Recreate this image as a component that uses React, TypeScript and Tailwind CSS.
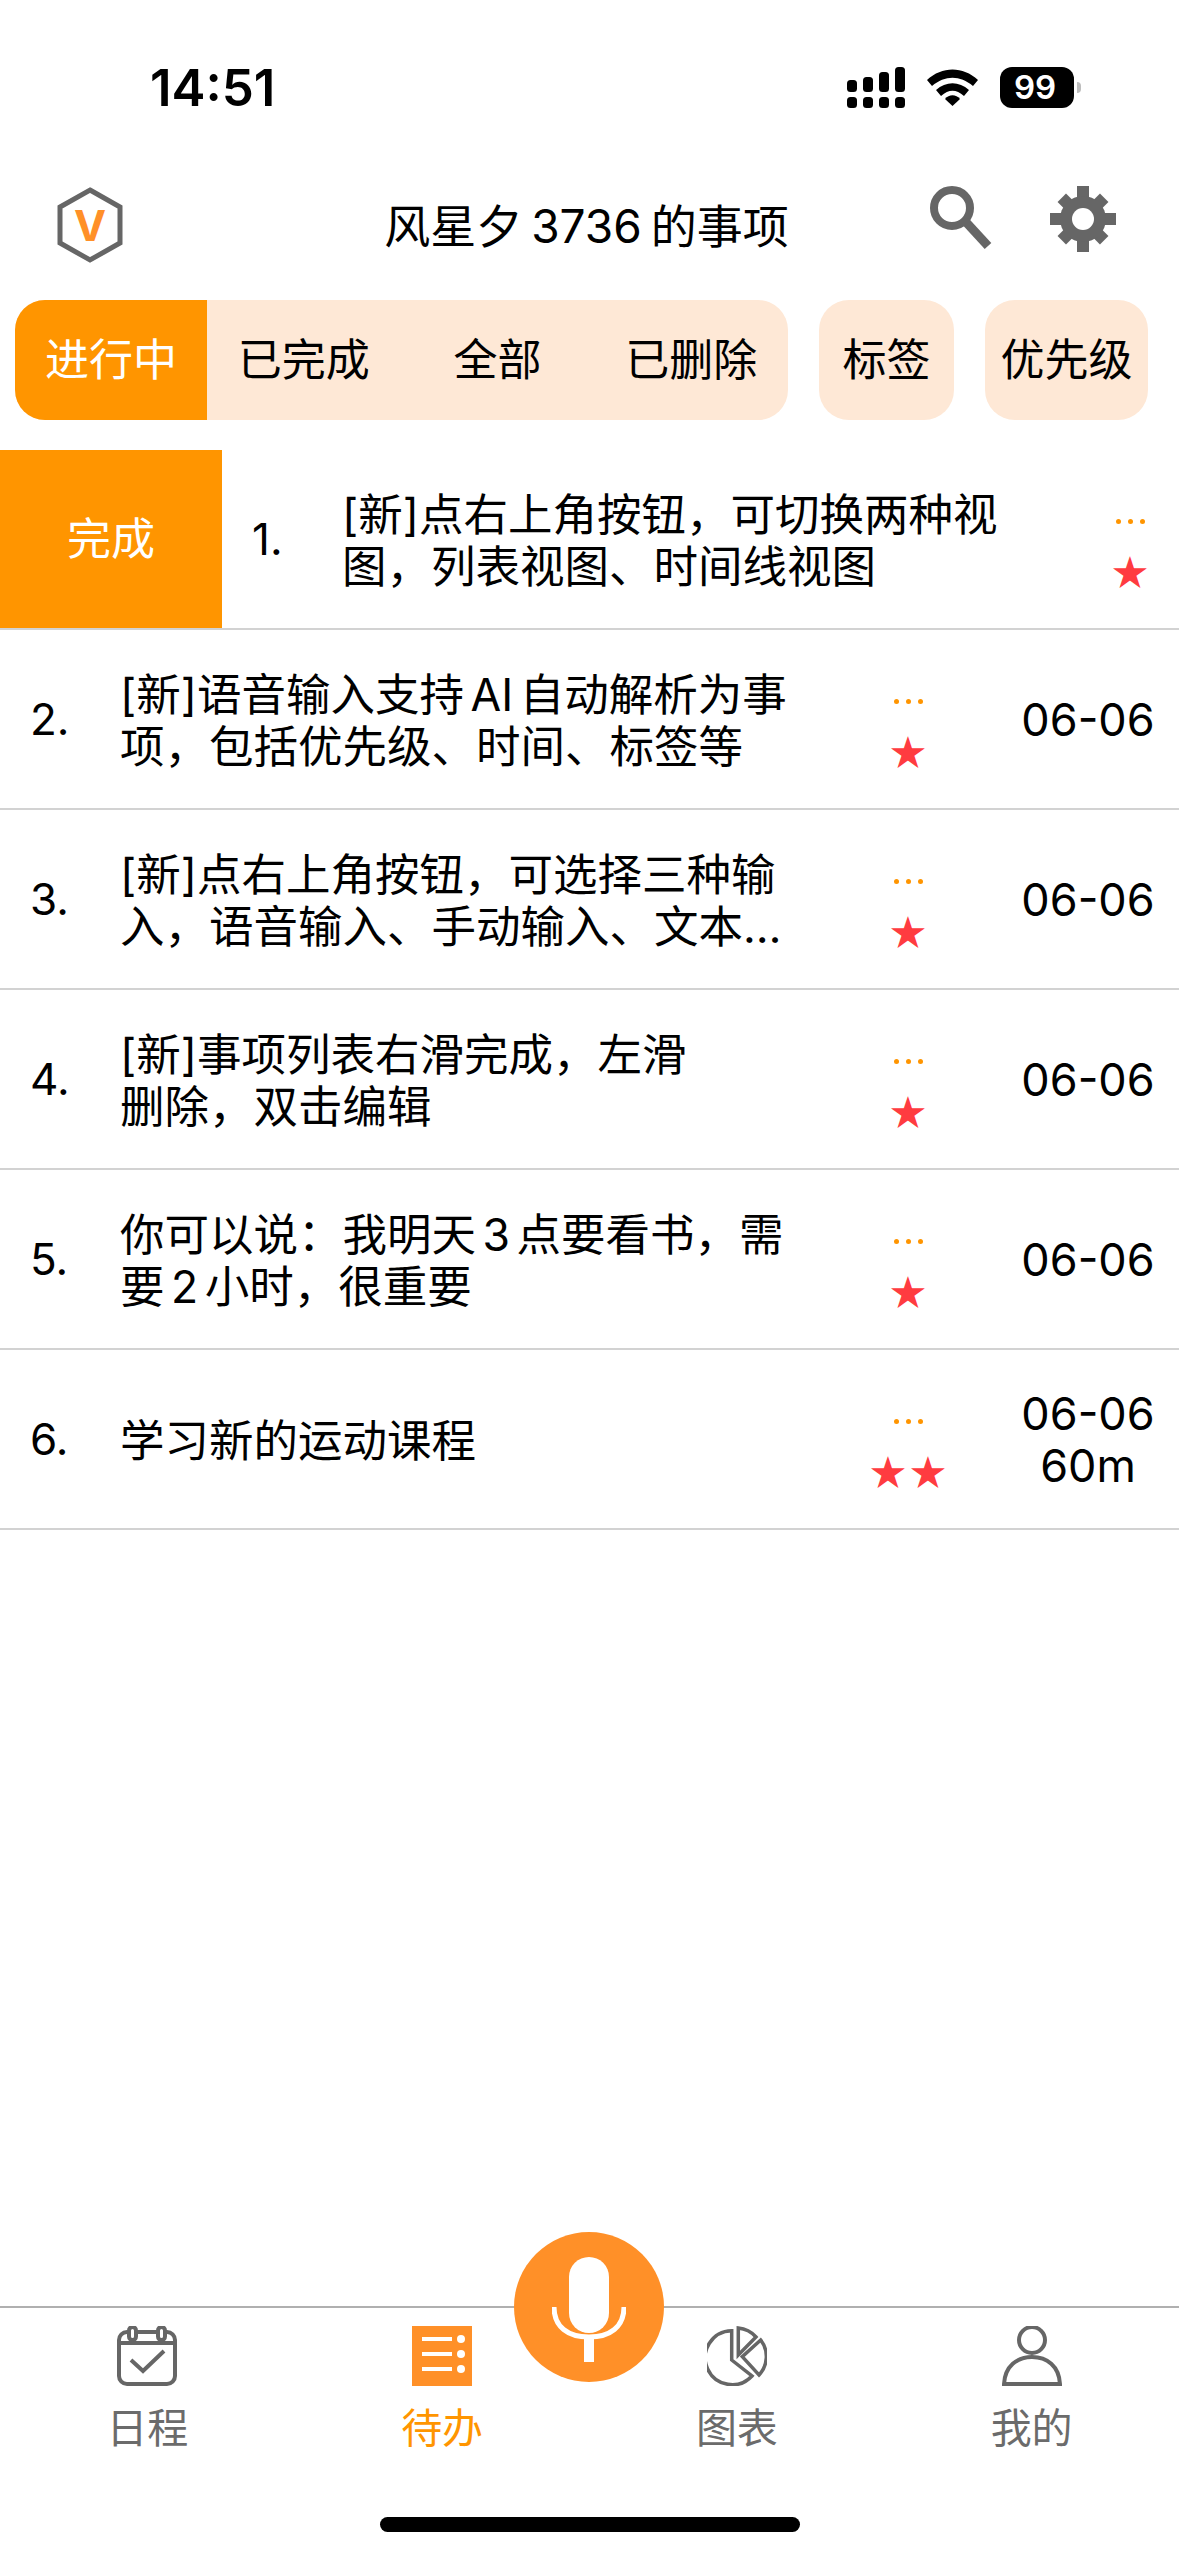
const rows = [
  { n: '1.', lines: ['[新]点右上角按钮，可切换两种视', '图，列表视图、时间线视图'], stars: '★', date: [] as string[], swiped: true },
  { n: '2.', lines: ['[新]语音输入支持 AI 自动解析为事', '项，包括优先级、时间、标签等'], stars: '★', date: ['06-06'] },
  { n: '3.', lines: ['[新]点右上角按钮，可选择三种输', '入，语音输入、手动输入、文本…'], stars: '★', date: ['06-06'] },
  { n: '4.', lines: ['[新]事项列表右滑完成，左滑', '删除，双击编辑'], stars: '★', date: ['06-06'] },
  { n: '5.', lines: ['你可以说：我明天 3 点要看书，需', '要 2 小时，很重要'], stars: '★', date: ['06-06'] },
  { n: '6.', lines: ['学习新的运动课程'], stars: '★★', date: ['06-06', '60m'] },
];

function StatusIcons() {
  return (
    <div className="flex items-center">
      <svg width="58" height="41" viewBox="0 0 58 41" fill="#000">
        <rect x="0" y="30" width="10" height="11" rx="3.5" />
        <rect x="16" y="30" width="10" height="11" rx="3.5" />
        <rect x="32" y="30" width="10" height="11" rx="3.5" />
        <rect x="48" y="30" width="10" height="11" rx="3.5" />
        <rect x="0" y="13" width="10" height="12" rx="3.5" />
        <rect x="16" y="10" width="10" height="15" rx="3.5" />
        <rect x="32" y="5" width="10" height="20" rx="3.5" />
        <rect x="48" y="0" width="10" height="25" rx="3.5" />
      </svg>
      <svg width="51" height="37" viewBox="0 0 51 37" className="ml-[22px]" fill="#000">
        <path d="M0 11 C15 -3 36 -3 51 11 L46 17 C33 6 18 6 5 17 Z" />
        <path d="M9 21 C19 12 32 12 42 21 L37 27 C29 20 22 20 14 27 Z" />
        <path d="M18 30 C22 25 29 25 33 30 L25.5 37 Z" />
      </svg>
      <div className="ml-[22px] flex h-[41px] w-[74px] items-center justify-center rounded-[12px] bg-black pr-[4px] font-['Inter'] text-[33px] font-semibold text-white">
        99
      </div>
      <div className="ml-[3px] h-[11px] w-[4px] rounded-r-full bg-[#bdbdbd]" />
    </div>
  );
}

function Logo() {
  return (
    <svg width="66" height="76" viewBox="0 0 66 76">
      <polygon points="33,3 63,20 63,56 33,73 3,56 3,20" fill="none" stroke="#666" strokeWidth="5" />
      <text x="33" y="54" textAnchor="middle" fontFamily="Inter" fontSize="43" fontWeight="700" fill="#ff9028">V</text>
    </svg>
  );
}

function SearchIcon() {
  return (
    <svg width="62" height="66" viewBox="0 0 62 66" fill="none" stroke="#666">
      <circle cx="22" cy="22" r="18" strokeWidth="8" />
      <path d="M35 35 L58 60" strokeWidth="9" />
    </svg>
  );
}

function GearIcon() {
  return (
    <svg width="66" height="66" viewBox="0 0 66 66">
      <g fill="#666">
        <rect x="27" y="0" width="12" height="66" />
        <rect x="0" y="27" width="66" height="12" />
        <rect x="27" y="3" width="12" height="60" transform="rotate(45 33 33)" />
        <rect x="27" y="3" width="12" height="60" transform="rotate(-45 33 33)" />
        <circle cx="33" cy="33" r="23" />
      </g>
      <circle cx="33" cy="33" r="11" fill="#fff" />
    </svg>
  );
}

function CalendarIcon() {
  return (
    <svg width="60" height="60" viewBox="0 0 60 60" fill="none" stroke="#666" strokeWidth="4">
      <rect x="2" y="6" width="56" height="52" rx="8" />
      <path d="M2 17 H58" />
      <rect x="12" y="1" width="7" height="13" rx="3.5" fill="#fff" />
      <rect x="41" y="1" width="7" height="13" rx="3.5" fill="#fff" />
      <path d="M14 34 L26 45 L47 25" />
    </svg>
  );
}

function TodoIcon() {
  return (
    <svg width="60" height="60" viewBox="0 0 60 60">
      <rect width="60" height="60" fill="#ff9028" />
      <g fill="#fff">
        <rect x="10" y="11" width="30" height="4" />
        <rect x="10" y="26" width="30" height="4" />
        <rect x="10" y="41" width="30" height="4" />
        <circle cx="49" cy="13" r="4" />
        <circle cx="49" cy="28" r="4" />
        <circle cx="49" cy="43" r="4" />
      </g>
    </svg>
  );
}

function ChartIcon() {
  return (
    <svg width="60" height="60" viewBox="0 0 60 60" fill="none" stroke="#666" strokeWidth="3.5">
      <path d="M24.7 4.7 A27 27 0 1 0 45 50 L24.7 34 Z" />
      <path d="M31.3 2 A27 27 0 0 1 49 11 L31.3 29 Z" />
      <path d="M53.7 14 A27 27 0 0 1 52 49 L35.3 30.7 Z" />
    </svg>
  );
}

function UserIcon() {
  return (
    <svg width="60" height="60" viewBox="0 0 60 60" fill="none" stroke="#666" strokeWidth="4">
      <circle cx="30" cy="14" r="13" />
      <path d="M2 58 C3 40 15 31 30 31 C45 31 57 40 58 58 Z" />
    </svg>
  );
}

function MicIcon() {
  return (
    <svg width="74" height="106" viewBox="0 0 74 106" fill="none">
      <rect x="17" y="0" width="40" height="76" rx="20" fill="#fff" />
      <path d="M2 50 C2 70 16 80 37 80 C58 80 72 70 72 50" stroke="#fff" strokeWidth="5" />
      <rect x="32" y="78" width="10" height="27" fill="#fff" />
    </svg>
  );
}

function Row({ row }: { row: (typeof rows)[number] }) {
  return (
    <div className="flex h-[180px] items-center overflow-hidden border-b-2 border-[#d2d2d2]">
      {row.swiped && (
        <div className="flex h-full w-[222px] shrink-0 items-center justify-center bg-[#ff9500] text-[44px] text-white">
          完成
        </div>
      )}
      <div className="flex w-[1179px] shrink-0 items-center pl-[30px] pr-[19px]">
        <div className="w-[90px] shrink-0 text-[44px] text-black">{row.n}</div>
        <div className="w-[680px] shrink-0 pt-[3px] text-[44.5px] leading-[52px] text-black [word-spacing:-6px]">
          {row.lines.map((line) => (
            <div key={line} className="whitespace-nowrap">{line}</div>
          ))}
        </div>
        <div className="flex w-[216px] shrink-0 flex-col items-center pt-[22px]">
          <div className="flex h-[22px] items-center gap-[7px]">
            <span className="size-[5px] rounded-full bg-[#ff9500]" />
            <span className="size-[5px] rounded-full bg-[#ff9500]" />
            <span className="size-[5px] rounded-full bg-[#ff9500]" />
          </div>
          <div className="mt-[18px] pl-[4px] font-['Noto_Sans_CJK_SC'] text-[36px] leading-[40px] tracking-[4px] text-[#ff3b40]">{row.stars}</div>
        </div>
        <div className="w-[144px] shrink-0 pt-[2px] text-center text-[45px] leading-[52px] text-black">
          {row.date.map((d) => (
            <div key={d}>{d}</div>
          ))}
        </div>
      </div>
    </div>
  );
}

function NavItem({ label, active, children }: { label: string; active?: boolean; children: React.ReactNode }) {
  return (
    <div className="flex flex-1 flex-col items-center pt-[18px]">
      {children}
      <div className={`mt-[17px] text-[41px] leading-[50px] ${active ? 'text-[#ff9500]' : 'text-[#6b6b6b]'}`}>{label}</div>
    </div>
  );
}

export default function App() {
  return (
    <div className="relative flex h-[2556px] w-[1179px] flex-col overflow-hidden bg-white font-['Inter','Noto_Sans_CJK_SC',sans-serif]">
      <div className="flex h-[170px] items-start justify-between pt-[67px] pl-[150px] pr-[98px]">
        <div className="font-['Inter'] text-[51px] font-semibold leading-[41px] text-black">14:51</div>
        <StatusIcons />
      </div>

      <div className="flex h-[110px] items-center pl-[57px] pr-[63px]">
        <div className="flex flex-1">
          <Logo />
        </div>
        <div className="pt-[2px] text-[46px] text-black [word-spacing:-4px]">风星夕 3736 的事项</div>
        <div className="-mt-[12px] flex flex-1 items-center justify-end gap-[58px]">
          <SearchIcon />
          <GearIcon />
        </div>
      </div>

      <div className="mt-[20px] mb-[30px] flex h-[120px] gap-[31px] pl-[15px] pr-[31px] text-[44px] text-black">
        <div className="flex w-[773px] overflow-hidden rounded-[30px] bg-[#fee8d6]">
          <div className="flex w-[192px] items-center justify-center bg-[#ff9500] text-white">进行中</div>
          <div className="flex flex-1 items-center justify-center">已完成</div>
          <div className="flex flex-1 items-center justify-center">全部</div>
          <div className="flex flex-1 items-center justify-center">已删除</div>
        </div>
        <div className="flex w-[135px] items-center justify-center rounded-[30px] bg-[#fee8d6]">标签</div>
        <div className="flex w-[163px] items-center justify-center rounded-[30px] bg-[#fee8d6]">优先级</div>
      </div>

      <div className="flex-1">
        {rows.map((row) => (
          <Row key={row.n} row={row} />
        ))}
      </div>

      <div className="flex h-[250px] border-t-2 border-[#b0b0b0]">
        <NavItem label="日程"><CalendarIcon /></NavItem>
        <NavItem label="待办" active><TodoIcon /></NavItem>
        <NavItem label="图表"><ChartIcon /></NavItem>
        <NavItem label="我的"><UserIcon /></NavItem>
      </div>

      <div className="absolute bottom-[174px] left-[514px] flex size-[150px] items-start justify-center rounded-full bg-[#ff9028] pt-[25px]">
        <MicIcon />
      </div>
      <div className="absolute bottom-[24px] left-[380px] h-[15px] w-[420px] rounded-full bg-black" />
    </div>
  );
}
